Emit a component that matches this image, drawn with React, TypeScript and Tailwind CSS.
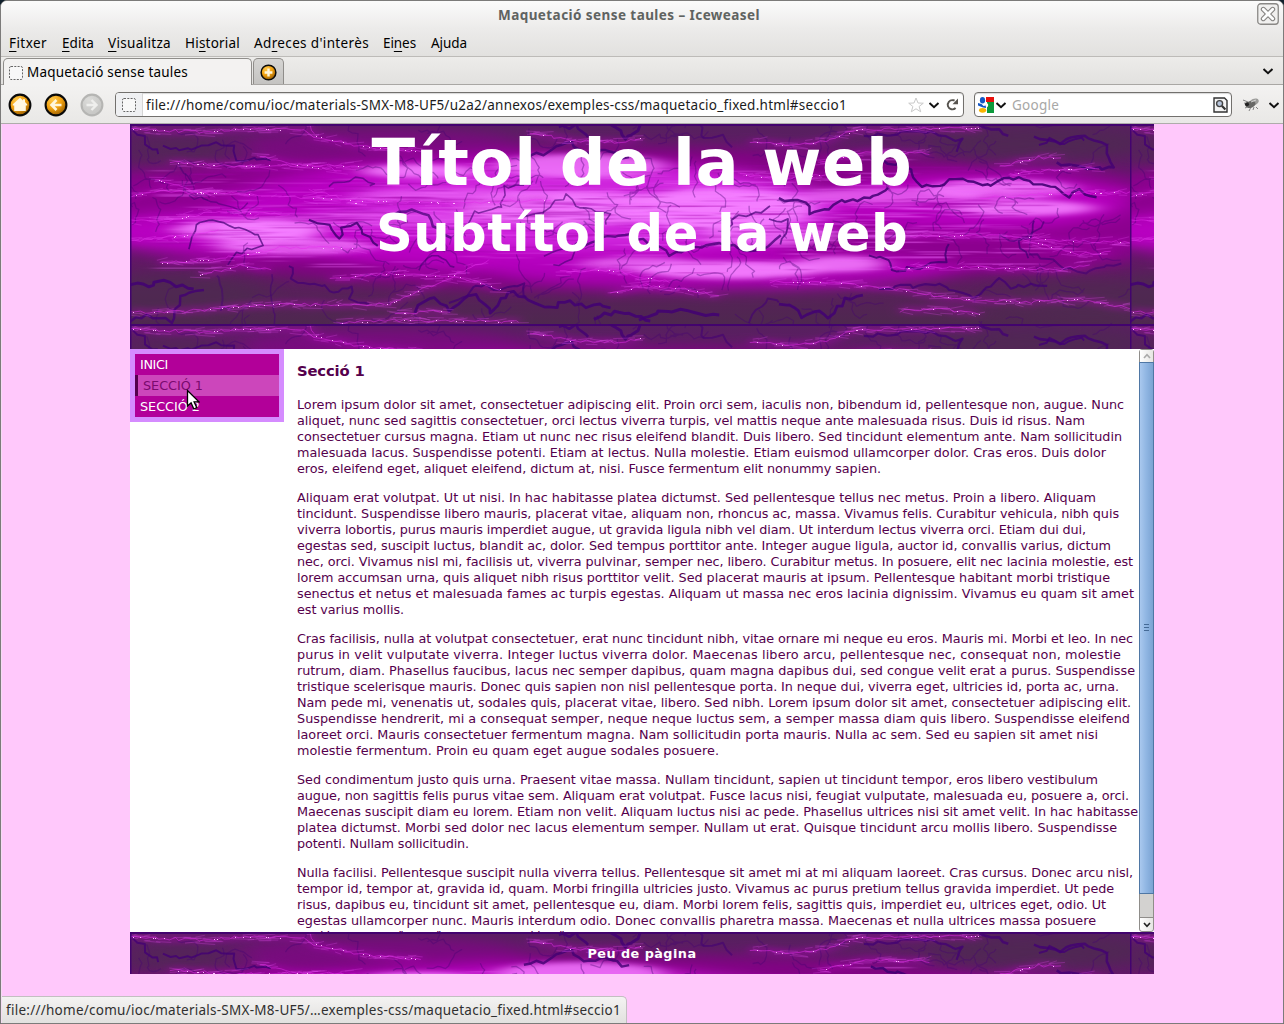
import React, { useLayoutEffect, useRef, useState } from "react";

const UI = "font-['Noto_Sans',sans-serif]";

/* Text set to a fixed measure: the tracking is derived from the natural width. */
function Fit({ w, className = "", children }: { w: number; className?: string; children: React.ReactNode }) {
  const ref = useRef<HTMLSpanElement>(null);
  const [ls, setLs] = useState(0);
  useLayoutEffect(() => {
    const el = ref.current;
    if (!el) return;
    const n = (el.textContent || "").length;
    setLs((w - el.getBoundingClientRect().width) / n);
  }, [w]);
  return (
    <span ref={ref} className={"inline-block whitespace-pre " + className} style={{ letterSpacing: ls }}>
      {children}
    </span>
  );
}

function rng(seed: number) {
  let s = seed;
  return () => {
    s = (s * 1664525 + 1013904223) % 4294967296;
    return s / 4294967296;
  };
}

type P = [number, number];

function jag(pts: P[], seed: number, amp: number, step: number) {
  const r = rng(seed);
  let d = "";
  for (let i = 0; i < pts.length - 1; i++) {
    const [x0, y0] = pts[i];
    const [x1, y1] = pts[i + 1];
    const n = Math.max(1, Math.round(Math.hypot(x1 - x0, y1 - y0) / step));
    for (let k = i === 0 ? 0 : 1; k <= n; k++) {
      const t = k / n;
      const x = x0 + (x1 - x0) * t + (r() - 0.5) * amp;
      const y = y0 + (y1 - y0) * t + (r() - 0.5) * amp;
      d += (d ? "L" : "M") + x.toFixed(1) + " " + y.toFixed(1);
    }
  }
  return d;
}

const GLOW: [number, number, number, number, string, number][] = [
  [500, 95, 540, 72, "#850087", 0.9],
  [150, 85, 240, 48, "#8d0090", 0.9],
  [880, 95, 200, 52, "#8d0090", 0.9],
  [250, 22, 150, 18, "#8a0090", 0.6],
  [400, 90, 310, 58, "#bb00c4", 0.95],
  [150, 108, 190, 24, "#bd00c6", 0.9],
  [840, 78, 160, 28, "#bb00c4", 0.9],
  [590, 145, 230, 20, "#b400bd", 0.85],
  [460, 84, 250, 42, "#d42be2", 0.85],
];
const HOT: [number, number, number, number, number][] = [
  [290, 47, 60, 7, 0.9],
  [450, 42, 85, 12, 0.8],
  [440, 84, 110, 17, 0.9],
  [590, 85, 95, 21, 1],
  [120, 106, 75, 11, 1],
  [165, 122, 80, 8, 0.9],
  [870, 65, 75, 10, 0.85],
  [890, 84, 75, 8, 0.9],
  [760, 72, 90, 8, 0.65],
  [600, 146, 95, 9, 0.95],
  [710, 140, 45, 8, 0.85],
  [510, 140, 60, 7, 0.7],
  [640, 112, 70, 10, 0.7],
  [330, 72, 110, 7, 0.5],
  [250, 95, 110, 8, 0.35],
];
const CRACKS: [P[], number, number][] = [
  [[[0, 0], [14, 14], [16, 21], [30, 28]], 2, 0.8],
  [[[34, 23], [62, 25], [78, 20], [103, 22], [107, 35], [140, 36]], 2, 0.8],
  [[[50, 42], [62, 58]], 1.6, 0.5],
  [[[60, 72], [85, 78], [90, 82], [108, 85], [120, 78]], 1.4, 0.5],
  [[[180, 96], [200, 100], [208, 116], [213, 102], [226, 100], [246, 122]], 2.2, 0.85],
  [[[60, 125], [65, 100], [90, 96], [110, 105], [130, 112], [134, 120], [105, 130], [100, 142]], 1.7, 0.7],
  [[[200, 62], [215, 58], [225, 55], [245, 58], [240, 62]], 1.6, 0.6],
  [[[0, 160], [18, 163], [26, 157], [46, 161], [62, 163]], 3, 0.85],
  [[[0, 197], [18, 191], [40, 198], [50, 181], [50, 172], [72, 168]], 2.5, 0.8],
  [[[88, 150], [92, 160], [90, 184], [100, 184]], 2, 0.45],
  [[[160, 140], [163, 156], [190, 160], [202, 170], [222, 163], [220, 175], [240, 180]], 2, 0.7],
  [[[143, 152], [140, 175], [146, 198]], 1.6, 0.5],
  [[[286, 190], [290, 180], [305, 175], [320, 185], [345, 170], [355, 180], [362, 190], [370, 175], [385, 168], [400, 178], [420, 184], [440, 176], [450, 182], [480, 182]], 2.8, 0.85],
  [[[320, 180], [338, 170], [345, 160], [370, 165], [395, 160], [395, 175]], 2, 0.7],
  [[[465, 196], [475, 190], [490, 188], [505, 190], [520, 197]], 3, 0.85],
  [[[395, 33], [415, 30], [436, 17], [455, 29], [470, 26], [500, 34]], 2.5, 0.8],
  [[[330, 110], [340, 95], [345, 88], [372, 84], [374, 64], [392, 62]], 1.6, 0.6],
  [[[395, 92], [415, 88], [425, 76], [438, 72], [445, 82], [460, 85], [480, 90], [475, 100]], 1.6, 0.6],
  [[[260, 92], [282, 86], [300, 92], [305, 104], [320, 112]], 2.6, 0.7],
  [[[290, 145], [300, 132], [312, 132], [325, 145]], 1.6, 0.6],
  [[[455, 120], [478, 112], [500, 112], [530, 122], [540, 130], [590, 120], [620, 128], [636, 125], [650, 112]], 2.4, 0.75],
  [[[415, 130], [435, 125], [452, 118], [440, 134], [425, 142]], 1.6, 0.6],
  [[[650, 76], [676, 78], [680, 91], [700, 85], [710, 78], [740, 74], [760, 65]], 2.5, 0.85],
  [[[600, 105], [602, 94], [632, 88], [640, 82]], 1.8, 0.7],
  [[[640, 96], [660, 97], [655, 110], [650, 122]], 1.8, 0.7],
  [[[742, 35], [752, 36], [780, 45], [790, 64], [815, 60], [820, 56], [845, 56], [856, 62], [872, 55], [895, 55], [905, 62], [925, 62], [940, 73], [950, 66], [965, 74]], 2.4, 0.9],
  [[[735, 12], [755, 10], [800, 8], [810, 12], [832, 16], [828, 26]], 2.3, 0.75],
  [[[850, 2], [870, 4], [880, 12]], 2.6, 0.75],
  [[[905, 12], [930, 18], [960, 12], [975, 22], [985, 45], [950, 44], [925, 38]], 2.6, 0.8],
  [[[910, 20], [920, 14], [928, 17], [933, 22], [940, 15], [955, 15]], 2, 0.8],
  [[[740, 130], [758, 136], [762, 146], [790, 143], [815, 137], [820, 118]], 2, 0.8],
  [[[750, 163], [790, 162], [810, 160], [825, 168], [845, 172], [870, 155], [880, 165], [890, 161], [915, 162]], 2.2, 0.75],
  [[[650, 178], [660, 180], [672, 192], [685, 186], [700, 192], [715, 176], [735, 170]], 2.8, 0.85],
  [[[510, 198], [530, 188], [550, 186], [570, 190], [590, 190]], 3, 0.85],
  [[[480, 1], [490, 8], [495, 16], [503, 10], [510, 0]], 3, 0.8],
  [[[430, 4], [445, 2], [460, 12]], 2.6, 0.8],
  [[[570, 0], [575, 16], [595, 10], [600, 24]], 2, 0.6],
  [[[905, 97], [900, 112], [888, 118], [900, 135]], 1.8, 0.7],
  [[[870, 110], [880, 118], [905, 108], [915, 98]], 1.6, 0.6],
  [[[900, 130], [925, 135], [932, 145], [960, 148], [990, 138]], 2, 0.6],
  [[[620, 198], [625, 185], [640, 175], [650, 178]], 2, 0.6],
];
const BOLTS: P[][] = [
  [[0, 5], [70, 8], [110, 5], [175, 6], [185, 12], [230, 22], [290, 27]],
  [[40, 38], [100, 42], [160, 41], [230, 42]],
  [[130, 32], [170, 42], [210, 46]],
  [[25, 55], [70, 68], [150, 72], [240, 77], [330, 79], [420, 76]],
  [[0, 72], [30, 66], [80, 70]],
  [[0, 97], [40, 96], [80, 88], [160, 90]],
  [[0, 117], [50, 112], [90, 107]],
  [[30, 139], [90, 135], [150, 124], [235, 124]],
  [[70, 151], [110, 142], [140, 145]],
  [[0, 188], [50, 188], [140, 180], [200, 181], [260, 180]],
  [[260, 180], [275, 172], [310, 158], [360, 135]],
  [[200, 154], [260, 150], [330, 153], [370, 165]],
  [[265, 189], [320, 187]],
  [[210, 199], [280, 196], [390, 198]],
  [[400, 8], [440, 17], [490, 18], [510, 14]],
  [[620, 17], [660, 22], [690, 18], [730, 5], [850, 4]],
  [[180, 1], [185, 10]],
  [[690, 38], [740, 28], [800, 30]],
  [[870, 42], [910, 33], [930, 35]],
  [[880, 50], [920, 46], [970, 44]],
  [[850, 74], [920, 70], [1000, 68]],
  [[780, 112], [870, 111], [940, 117], [1000, 118]],
  [[890, 113], [920, 123], [950, 130], [980, 128]],
  [[760, 144], [830, 143], [930, 145], [960, 140]],
  [[640, 158], [700, 158], [770, 166], [830, 175], [900, 178], [950, 175], [1000, 184]],
  [[770, 187], [810, 185], [850, 190]],
  [[510, 160], [560, 166], [590, 172]],
  [[430, 148], [480, 146], [540, 158]],
  [[480, 170], [520, 160]],
  [[230, 80], [180, 66]],
  [[610, 50], [650, 55], [700, 50]],
];

function buildArt() {
  const r = rng(77);
  const faint: string[] = [];
  for (let i = 0; i < 200; i++) {
    let x = r() * 1000;
    let y = r() * 200;
    let a = r() * 6.28;
    const pts: P[] = [[x, y]];
    for (let k = 0; k < 5; k++) {
      a += (r() - 0.5) * 2.4;
      x += Math.cos(a) * 9;
      y += Math.sin(a) * 8;
      pts.push([x, y]);
    }
    faint.push(jag(pts, 900 + i, 3, 4));
  }
  const streaks: { x: number; y: number; w: number; o: number; c: string }[] = [];
  for (let i = 0; i < 620; i++) {
    const x = 20 + r() * 860;
    const y = 32 + (r() + r()) * 60;
    const dark = r() < 0.45;
    streaks.push({ x, y, w: 16 + r() * 60, o: 0.12 + r() * 0.26, c: dark ? "#a000aa" : "#ee66fb" });
  }
  const feathers: string[] = [];
  const dots: P[] = [];
  BOLTS.forEach((b) => {
    for (let i = 0; i < b.length - 1; i++) {
      const len = Math.abs(b[i + 1][0] - b[i][0]);
      const n = Math.ceil(len / 5);
      for (let k = 0; k < n; k++) {
        const t = r();
        const x = b[i][0] + (b[i + 1][0] - b[i][0]) * t;
        const y = b[i][1] + (b[i + 1][1] - b[i][1]) * t + (r() - 0.5) * 7;
        const w = 5 + r() * 17;
        feathers.push(`M${(x - w / 2).toFixed(1)} ${y.toFixed(1)}l${w.toFixed(1)} ${((r() - 0.5) * 6).toFixed(1)}`);
        if (r() < 0.3) dots.push([Math.round(x), Math.round(b[i][1] + (b[i + 1][1] - b[i][1]) * t)]);
      }
    }
  });
  return { faint, streaks, feathers, dots };
}
const ART = buildArt();
const BOLT_PATH = BOLTS.map((b, i) => jag(b, 500 + i, 3, 5)).join("");

function Storm({ id, h }: { id: string; h: number }) {
  return (
    <svg className="col-start-1 row-start-1 block" width="1024" height={h} viewBox={`0 0 1024 ${h}`}>
      <defs>
        <filter id={id + "b"} filterUnits="userSpaceOnUse" x="-60" y="-40" width="1120" height="280" colorInterpolationFilters="sRGB">
          <feGaussianBlur stdDeviation="16 7" />
        </filter>
        <filter id={id + "h"} filterUnits="userSpaceOnUse" x="-60" y="-40" width="1120" height="280" colorInterpolationFilters="sRGB">
          <feGaussianBlur stdDeviation="12 2.6" />
        </filter>
        <filter id={id + "s"} filterUnits="userSpaceOnUse" x="-60" y="-40" width="1120" height="280" colorInterpolationFilters="sRGB">
          <feGaussianBlur stdDeviation="6 0.6" />
        </filter>
        <filter id={id + "c"} filterUnits="userSpaceOnUse" x="-60" y="-40" width="1120" height="280" colorInterpolationFilters="sRGB">
          <feGaussianBlur stdDeviation="0.6" />
        </filter>
        <filter id={id + "w"} filterUnits="userSpaceOnUse" x="-60" y="-40" width="1120" height="280" colorInterpolationFilters="sRGB">
          <feGaussianBlur stdDeviation="6 2.6" />
        </filter>
        <linearGradient id={id + "g"} x1="0" y1="0" x2="0" y2="1">
          <stop offset="0" stopColor="#57205f" />
          <stop offset="0.5" stopColor="#6b0f70" />
          <stop offset="1" stopColor="#4e284f" />
        </linearGradient>
        <pattern id={id + "t"} patternUnits="userSpaceOnUse" width="1000" height="200">
          <rect width="1000" height="200" fill={`url(#${id}g)`} />
          <g filter={`url(#${id}b)`}>
            {GLOW.map(([x, y, rx, ry, c, o], i) => (
              <ellipse key={i} cx={x} cy={y} rx={rx} ry={ry} fill={c} opacity={o} />
            ))}
          </g>
          <g filter={`url(#${id}h)`}>
            {HOT.map(([x, y, rx, ry, o], i) => (
              <ellipse key={i} cx={x} cy={y} rx={rx} ry={ry} fill="#f47dff" opacity={o} />
            ))}
          </g>
          <g filter={`url(#${id}b)`} fill="#4c2b4e">
            <ellipse cx="50" cy="28" rx="60" ry="14" opacity="0.5" />
            <ellipse cx="40" cy="172" rx="100" ry="22" opacity="0.7" />
            <ellipse cx="910" cy="20" rx="120" ry="16" opacity="0.7" />
            <ellipse cx="960" cy="175" rx="100" ry="20" opacity="0.6" />
          </g>
          <path d={BOLT_PATH} filter={`url(#${id}w)`} fill="none" stroke="#b800c0" strokeWidth="8" opacity="0.3" />
          <g filter={`url(#${id}s)`}>
            {ART.streaks.map((s, i) => (
              <rect key={i} x={s.x} y={s.y} width={s.w} height="1.6" fill={s.c} opacity={s.o} />
            ))}
          </g>
          <g filter={`url(#${id}c)`} fill="none" stroke="#420073" strokeLinejoin="round">
            <path d={ART.faint.join("")} strokeWidth="1.3" opacity="0.36" />
            {CRACKS.map(([p, w, o], i) => (
              <path key={i} d={jag(p, 31 + i, 4.5, 6)} strokeWidth={w} opacity={o} />
            ))}
          </g>
          <g fill="none">
            <path d={ART.feathers.join("")} stroke="#ea50f6" strokeWidth="0.6" opacity="0.42" />
            <path d={BOLT_PATH} stroke="#e62cee" strokeWidth="0.7" opacity="0.7" />
          </g>
          {ART.dots.map(([x, y], i) => (
            <rect key={i} x={x} y={y} width="1" height="1" fill="#ffb8ff" />
          ))}
          <rect width="1000" height="2" fill="#400070" opacity="0.9" />
          <rect width="1.5" height="200" fill="#400070" opacity="0.9" />
        </pattern>
      </defs>
      <rect width="1024" height={h} fill={`url(#${id}t)`} />
    </svg>
  );
}

const TEXT: [string, number][][] = [
  [
    ["Lorem ipsum dolor sit amet, consectetuer adipiscing elit. Proin orci sem, iaculis non, bibendum id, pellentesque non, augue. Nunc", 1124],
    ["aliquet, nunc sed sagittis consectetuer, orci lectus viverra turpis, vel mattis neque ante malesuada risus. Duis id risus. Nam", 1085],
    ["consectetuer cursus magna. Etiam ut nunc nec risus eleifend blandit. Duis libero. Sed tincidunt elementum ante. Nam sollicitudin", 1122],
    ["malesuada lacus. Suspendisse potenti. Etiam at lectus. Nulla molestie. Etiam euismod ullamcorper dolor. Cras eros. Duis dolor", 1106],
    ["eros, eleifend eget, aliquet eleifend, dictum at, nisi. Fusce fermentum elit nonummy sapien.", 881],
  ],
  [
    ["Aliquam erat volutpat. Ut ut nisi. In hac habitasse platea dictumst. Sed pellentesque tellus nec metus. Proin a libero. Aliquam", 1096],
    ["tincidunt. Suspendisse libero mauris, placerat vitae, aliquam non, rhoncus ac, massa. Vivamus felis. Curabitur vehicula, nibh quis", 1119],
    ["viverra lobortis, purus mauris imperdiet augue, ut gravida ligula nibh vel diam. Ut interdum lectus viverra orci. Etiam dui dui,", 1086],
    ["egestas sed, suscipit luctus, blandit ac, dolor. Sed tempus porttitor ante. Integer augue ligula, auctor id, convallis varius, dictum", 1111],
    ["nec, orci. Vivamus nisl mi, facilisis ut, viverra pulvinar, semper nec, libero. Curabitur metus. In posuere, elit nec lacinia molestie, est", 1133],
    ["lorem accumsan urna, quis aliquet nibh risus porttitor velit. Sed placerat mauris at ipsum. Pellentesque habitant morbi tristique", 1110],
    ["senectus et netus et malesuada fames ac turpis egestas. Aliquam ut massa nec eros lacinia dignissim. Vivamus eu quam sit amet", 1134],
    ["est varius mollis.", 404],
  ],
  [
    ["Cras facilisis, nulla at volutpat consectetuer, erat nunc tincidunt nibh, vitae ornare mi neque eu eros. Mauris mi. Morbi et leo. In nec", 1133],
    ["purus in velit vulputate viverra. Integer luctus viverra dolor. Maecenas libero arcu, pellentesque nec, consequat non, molestie", 1121],
    ["rutrum, diam. Phasellus faucibus, lacus nec semper dapibus, quam magna dapibus dui, sed congue velit erat a purus. Suspendisse", 1135],
    ["tristique scelerisque mauris. Donec quis sapien non nisl pellentesque porta. In neque dui, viverra eget, ultricies id, porta ac, urna.", 1119],
    ["Nam pede mi, venenatis ut, sodales quis, placerat vitae, libero. Sed nibh. Lorem ipsum dolor sit amet, consectetuer adipiscing elit.", 1131],
    ["Suspendisse hendrerit, mi a consequat semper, neque neque luctus sem, a semper massa diam quis libero. Suspendisse eleifend", 1130],
    ["laoreet orci. Mauris consectetuer fermentum magna. Nam sollicitudin porta mauris. Nulla ac sem. Sed eu sapien sit amet nisi", 1098],
    ["molestie fermentum. Proin eu quam eget augue sodales posuere.", 719],
  ],
  [
    ["Sed condimentum justo quis urna. Praesent vitae massa. Nullam tincidunt, sapien ut tincidunt tempor, eros libero vestibulum", 1098],
    ["augue, non sagittis felis purus vitae sem. Aliquam erat volutpat. Fusce lacus nisi, feugiat vulputate, malesuada eu, posuere a, orci.", 1129],
    ["Maecenas suscipit diam eu lorem. Etiam non velit. Aliquam luctus nisi ac pede. Phasellus ultrices nisi sit amet velit. In hac habitasse", 1138],
    ["platea dictumst. Morbi sed dolor nec lacus elementum semper. Nullam ut erat. Quisque tincidunt arcu mollis libero. Suspendisse", 1117],
    ["potenti. Nullam sollicitudin.", 469],
  ],
  [
    ["Nulla facilisi. Pellentesque suscipit nulla viverra tellus. Pellentesque sit amet mi at mi aliquam laoreet. Cras cursus. Donec arcu nisl,", 1133],
    ["tempor id, tempor at, gravida id, quam. Morbi fringilla ultricies justo. Vivamus ac purus pretium tellus gravida imperdiet. Ut pede", 1114],
    ["risus, dapibus eu, tincidunt sit amet, pellentesque eu, diam. Morbi lorem felis, sagittis quis, imperdiet eu, ultrices eget, odio. Ut", 1106],
    ["egestas ullamcorper nunc. Mauris interdum odio. Donec convallis pharetra massa. Maecenas et nulla ultrices massa posuere", 1096],
    ["gravida nunc sem, diam a diam eu purus gravida odio.", 572],
  ],
];

const MENU: [string, string, string, number, number][] = [
  ["", "F", "itxer", 38, 15],
  ["", "E", "dita", 32, 14],
  ["", "V", "isualitza", 63, 14],
  ["Hi", "s", "torial", 55, 14],
  ["Ad", "r", "eces d'interès", 115, 14],
  ["Ei", "n", "es", 33, 15],
  ["A", "", "juda", 36, 0],
];

function Chevron({ className = "" }: { className?: string }) {
  return (
    <svg className={className} width="12" height="12" viewBox="0 0 12 12" fill="none" stroke="#111" strokeWidth="2">
      <path d="M1.5 4 6 8.2 10.5 4" />
    </svg>
  );
}

function Ball({ size, kind }: { size: number; kind: "home" | "back" | "fwd" | "plus" }) {
  const off = kind === "fwd";
  return (
    <svg width={size} height={size} viewBox="0 0 24 24" className="block shrink-0">
      <defs>
        <radialGradient id={"o" + kind} cx="0.35" cy="0.25" r="0.85">
          <stop offset="0" stopColor={off ? "#dcdcda" : "#ffc84a"} />
          <stop offset="0.5" stopColor={off ? "#cfcfcd" : "#f0a010"} />
          <stop offset="1" stopColor={off ? "#c4c4c2" : "#8a5200"} />
        </radialGradient>
      </defs>
      <circle cx="12" cy="12" r="10.4" fill={`url(#o${kind})`} stroke={off ? "#b5b5b3" : "#0a0a0a"} strokeWidth="2.1" />
      {kind === "home" && <path d="M12 4.8 4.8 11.2V12.6H6.2V18H17.8V12.6H19.2V11.2L17 9V6.2H15V7.4Z" fill="#fff8e4" />}
      {kind === "back" && <path d="M12.5 7 7.5 12l5 5M8 12h9.5" fill="none" stroke="#fff6dc" strokeWidth="2.6" />}
      {kind === "fwd" && <path d="M11.5 7l5 5-5 5M16 12H6.5" fill="none" stroke="#efefed" strokeWidth="2.4" />}
      {kind === "plus" && <path d="M12 6.5v11M6.5 12h11" stroke="#fff6dc" strokeWidth="3.4" />}
    </svg>
  );
}

function Dashed() {
  return (
    <svg width="14" height="14" viewBox="0 0 14 14" className="block shrink-0">
      <rect x="0.5" y="0.5" width="13" height="13" rx="1.5" fill="#f8f8f8" stroke="#666" strokeDasharray="2 1.3" />
    </svg>
  );
}

export default function App() {
  return (
    <div className="relative flex h-[1024px] w-[1284px] flex-col overflow-hidden bg-[#10202c]">
      <div className="flex h-[1024px] flex-col overflow-hidden rounded-t-[7px] border border-[#7c7b7a] bg-[#ededeb]">
        {/* title and menu */}
        <div className="flex h-[56px] shrink-0 flex-col border-b border-[#bdbbb8] bg-gradient-to-b from-[#fbfbfb] via-[#ecebea] to-[#e2e1df]">
          <div className="flex h-[29px] items-start">
            <Fit w={262} className={`${UI} ml-[497px] text-[13.5px] leading-[29px] font-bold text-[#5f6361]`}>Maquetació sense taules – Iceweasel</Fit>
            <svg className="mt-[2px] mr-[4px] ml-auto" width="22" height="22" viewBox="0 0 22 22">
              <rect x="0.75" y="0.75" width="20.5" height="20.5" rx="3" fill="#f1f0ef" stroke="#8a8886" strokeWidth="1.3" />
              <path d="M6.3 6.3l9.4 9.4M15.7 6.3l-9.4 9.4" stroke="#858381" strokeWidth="5" strokeLinecap="round" />
              <path d="M6.3 6.3l9.4 9.4M15.7 6.3l-9.4 9.4" stroke="#fdfdfd" strokeWidth="2.8" strokeLinecap="round" />
            </svg>
          </div>
          <div className={`${UI} flex h-[26px] items-center pl-[8px] text-[13.5px] text-black`}>
            {MENU.map(([a, b, c, w, gap], i) => (
              <span key={i} className="flex">
                <Fit w={w}>
                  {a}
                  <span className="underline decoration-1 underline-offset-[3px]">{b}</span>
                  {c}
                </Fit>
                <span style={{ width: gap }} />
              </span>
            ))}
          </div>
        </div>
        {/* tabs */}
        <div className="flex h-[28px] shrink-0 items-end border-b border-[#a9a7a4] bg-gradient-to-b from-[#edecea] to-[#e2e1df]">
          <div className="-mb-px ml-[2px] flex h-[27px] w-[249px] items-center gap-[4px] rounded-t-[5px] border border-b-0 border-[#8f8d8a] bg-[#f3f2f1] pt-px pl-[5px]">
            <Dashed />
            <Fit w={161} className={`${UI} text-[13.5px] text-black`}>Maquetació sense taules</Fit>
          </div>
          <div className="ml-px flex h-[26px] w-[31px] items-center justify-center rounded-t-[5px] border border-b-0 border-[#8f8d8a] bg-gradient-to-b from-[#d6d5d3] to-[#c4c3c1] pt-px">
            <Ball size={17} kind="plus" />
          </div>
          <Chevron className="mr-[9px] mb-[7px] ml-auto" />
        </div>
        {/* navigation bar */}
        <div className="flex h-[39px] shrink-0 items-center border-b border-[#aeacaa] bg-gradient-to-b from-[#f3f2f1] to-[#e9e8e6] pt-px pl-[7px]">
          <Ball size={24} kind="home" />
          <span className="w-[12px]" />
          <Ball size={24} kind="back" />
          <span className="w-[12px]" />
          <Ball size={24} kind="fwd" />
          <div className="ml-[11px] flex h-[25px] w-[849px] items-center overflow-hidden rounded-[4px] border border-[#72706d] bg-white shadow-[inset_0_1px_1px_#d8d8d8]">
            <div className="flex h-full w-[27px] items-center justify-center border-r border-[#d5d5d5] bg-[#eff0f2]">
              <Dashed />
            </div>
            <Fit w={701} className={`${UI} ml-[3px] pt-[2px] text-[13.5px] text-[#1c1c1c]`}>file:///home/comu/ioc/materials-SMX-M8-UF5/u2a2/annexos/exemples-css/maquetacio_fixed.html#seccio1</Fit>
            <svg className="ml-auto" width="16" height="16" viewBox="0 0 16 16">
              <path d="M8 1l2 5 5.3.2-4.2 3.3 1.6 5.3L8 11.8l-4.7 3 1.6-5.3L.7 6.2 6 6z" fill="#fff" stroke="#c9c9c9" />
            </svg>
            <Chevron className="ml-[4px]" />
            <svg className="mr-[4px] ml-[6px]" width="13" height="13" viewBox="0 0 13 13">
              <path d="M9.6 10A4.6 4.6 0 1 1 7 2.2H8.6" fill="none" stroke="#57544f" strokeWidth="1.9" />
              <path d="M12 0.5V6.2H6.5Z" fill="#57544f" />
            </svg>
          </div>
          <div className="ml-[10px] flex h-[25px] w-[258px] items-center rounded-[4px] border border-[#72706d] bg-white pl-[3px] shadow-[inset_0_1px_1px_#d8d8d8]">
            <svg width="16" height="16" viewBox="0 0 16 16">
              <path d="M8 0h8v5H8z" fill="#e8100c" />
              <path d="M9 5h7v11H9z" fill="#0c9a3c" />
              <path d="M0 0h8v16H0z" fill="#fff" />
              <ellipse cx="4.5" cy="3.2" rx="2.6" ry="3.2" fill="#1357c4" />
              <path d="M0 6l3.5 1 2 2 2.5-.5L8 11 5 10.5 0 8.5z" fill="#1357c4" />
              <ellipse cx="4.6" cy="13.3" rx="3.6" ry="2.4" fill="#f8b400" />
              <path d="M7.5 5.5c3.5 1 3.5 4 .5 5.5z" fill="#fff" />
            </svg>
            <Chevron className="ml-px" />
            <Fit w={47} className={`${UI} ml-[5px] pt-[2px] text-[13.5px] text-[#a8a8a6]`}>Google</Fit>
            <svg className="mr-[3px] ml-auto" width="15" height="16" viewBox="0 0 15 16">
              <path d="M1 1h10.5L14 3.5V15H1z" fill="#f4f4f4" stroke="#333" strokeWidth="1.4" />
              <circle cx="6.6" cy="6.6" r="3" fill="#b8c6dc" stroke="#444" strokeWidth="1.4" />
              <path d="M9 9l3.4 3.6" stroke="#333" strokeWidth="2.2" />
            </svg>
          </div>
          <svg className="ml-[11px]" width="17" height="15" viewBox="0 0 17 15">
            <g stroke="#777" strokeWidth="0.9" fill="none">
              <path d="M1 6l4 1M2 11l4-2M6 14l2-4M10 13l1-3M13 10l2 2M0 3l5 2" />
            </g>
            <ellipse cx="11" cy="5" rx="5" ry="3.2" fill="#9d9d9b" transform="rotate(-22 11 5)" />
            <ellipse cx="7.5" cy="7.5" rx="5.2" ry="3.3" fill="#686866" transform="rotate(-18 7.5 7.5)" />
            <circle cx="4" cy="7.3" r="2" fill="#222" />
            <path d="M8 5l5-2" stroke="#d4d4d4" />
          </svg>
          <Chevron className="ml-[8px]" />
        </div>
        {/* document */}
        <div className="flex grow flex-col items-center border-l border-[#f4dcf2] bg-[#ffc8fb] pr-px">
          <div className="flex w-[1024px] flex-col bg-white font-['DejaVu_Sans',sans-serif]">
            <header className="grid h-[225px] overflow-hidden">
              <Storm id="hd" h={225} />
              <div className="z-10 col-start-1 row-start-1 flex flex-col items-center pt-px font-bold text-white">
                <h1 className="h-[76px] text-[64px] leading-[76px] whitespace-nowrap"><Fit w={541}>Títol de la web</Fit></h1>
                <h2 className="h-[64px] text-[51.2px] leading-[64px] whitespace-nowrap"><Fit w={532}>Subtítol de la web</Fit></h2>
              </div>
            </header>
            <div className="flex h-[583px] overflow-hidden">
              <nav className="h-[73px] w-[154px] border-[5px] border-[#d58cff] bg-[#b20099] text-[12.8px] leading-[21px] text-white">
                <div className="h-[21px] pl-[5px]"><Fit w={28}>INICI</Fit></div>
                <div className="h-[21px] border-l-[3px] border-[#55004c] bg-[#cc46bb] pl-[5px] text-[#7a0a6e]"><Fit w={60}>SECCIÓ 1</Fit></div>
                <div className="h-[21px] pl-[5px]"><Fit w={60}>SECCIÓ 2</Fit></div>
              </nav>
              <main className="ml-[13px] w-[842px] shrink-0 text-[12.8px] leading-[16px] text-[#55004c]">
                <h3 className="mt-[12px] mb-[16px] text-[14.8px] leading-[20px] font-bold"><Fit w={67.5}>Secció 1</Fit></h3>
                {TEXT.map((p, i) => (
                  <p key={i} className="mb-[13px]">
                    {p.map(([t, x], k) => (
                      <span key={k} className={i === 4 && k === 4 ? "-mt-px block h-[16px]" : "block h-[16px]"}><Fit w={x - 297}>{t}</Fit></span>
                    ))}
                  </p>
                ))}
              </main>
              <div className="flex w-[15px] shrink-0 flex-col rounded-[3px] border border-[#8f8d8a] bg-[#d3d2d0]">
                <div className="flex h-[12px] shrink-0 items-center justify-center bg-gradient-to-r from-white to-[#e6e5e3]">
                  <svg width="8" height="6" viewBox="0 0 8 6" fill="none" stroke="#aaa" strokeWidth="1.6"><path d="M1 5l3-3.4L7 5" /></svg>
                </div>
                <div className="-mx-px flex h-[532px] shrink-0 flex-col items-center justify-center gap-[2px] border border-[#4f77a5] bg-gradient-to-r from-[#a9c8ee] via-[#8fb5e2] to-[#7ba3d3] pb-[2px]">
                  <div className="h-px w-[5px] bg-[#456a96]" />
                  <div className="h-px w-[5px] bg-[#456a96]" />
                  <div className="h-px w-[5px] bg-[#456a96]" />
                </div>
                <div className="mt-auto flex h-[14px] shrink-0 items-center justify-center rounded-b-[3px] border-t border-[#8f8d8a] bg-gradient-to-r from-white to-[#e6e5e3]">
                  <svg width="8" height="6" viewBox="0 0 8 6" fill="none" stroke="#222" strokeWidth="1.6"><path d="M1 1l3 3.4L7 1" /></svg>
                </div>
              </div>
            </div>
            <footer className="grid h-[42px] overflow-hidden">
              <Storm id="ft" h={42} />
              <div className="z-10 col-start-1 row-start-1 pt-px text-center text-[12.8px] leading-[42px] font-bold text-white"><Fit w={109}>Peu de pàgina</Fit></div>
            </footer>
          </div>
        </div>
      </div>
      {/* link status */}
      <div className="absolute top-[996px] left-[2px] flex h-[27px] w-[625px] items-center rounded-tr-[5px] border-t border-r border-[#c2bfc0] bg-gradient-to-b from-[#f4f3f2] to-[#e2e1df] pt-px pl-[4px]">
        <Fit w={615} className={`${UI} text-[13.5px] text-[#303030]`}>file:///home/comu/ioc/materials-SMX-M8-UF5/…exemples-css/maquetacio_fixed.html#seccio1</Fit>
      </div>
      {/* pointer */}
      <svg className="absolute top-[389px] left-[186px]" width="14" height="22" viewBox="0 0 14 22">
        <path d="M1.5 1.5V17l3.6-3.2L7.8 20l3-1.3-2.7-5.9h4.8z" fill="#fff" stroke="#000" strokeWidth="1.3" />
      </svg>
    </div>
  );
}
